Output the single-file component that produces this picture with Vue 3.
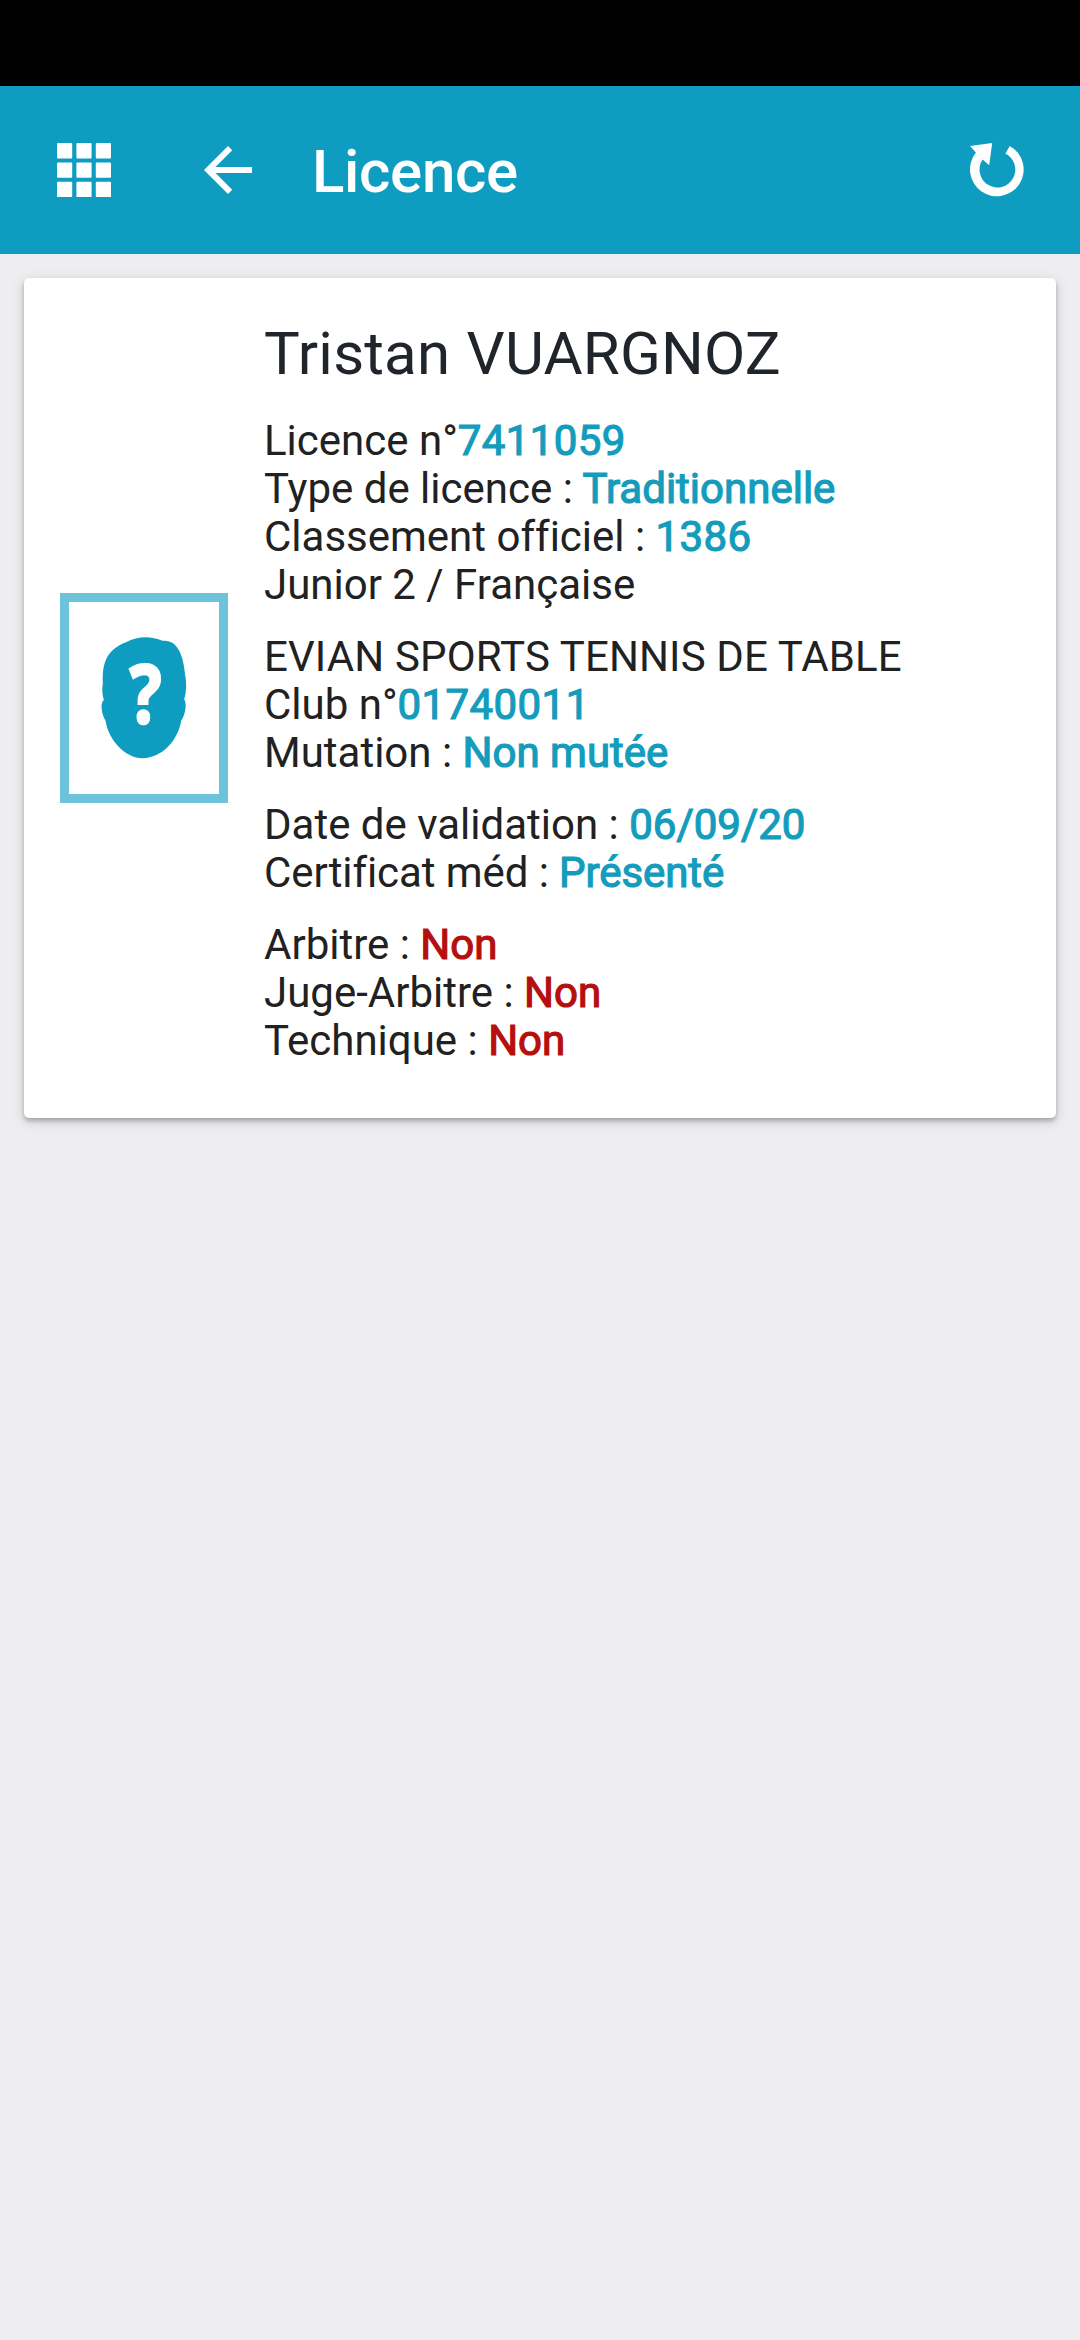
<script setup>
const groups = [
  [
    { label: 'Licence n°', value: '7411059', numeric: true },
    { label: 'Type de licence : ', value: 'Traditionnelle' },
    { label: 'Classement officiel : ', value: '1386', numeric: true },
    { label: 'Junior 2 / Française' },
  ],
  [
    { label: 'EVIAN SPORTS TENNIS DE TABLE', caps: true },
    { label: 'Club n°', value: '01740011', numeric: true },
    { label: 'Mutation : ', value: 'Non mutée' },
  ],
  [
    { label: 'Date de validation : ', value: '06/09/20' },
    { label: 'Certificat méd : ', value: 'Présenté', tight: true },
  ],
  [
    { label: 'Arbitre : ', value: 'Non', negative: true },
    { label: 'Juge-Arbitre : ', value: 'Non', negative: true },
    { label: 'Technique : ', value: 'Non', negative: true },
  ],
]
const cells = [0, 19.4, 38.8]
</script>

<template>
  <div class="screen">
    <div class="status-bar"></div>
    <header class="app-bar">
      <svg class="icon-grid" viewBox="0 0 54 54" fill="#fff">
        <template v-for="y in cells" :key="y">
          <rect v-for="x in cells" :key="x" :x="x" :y="y" width="15.2" height="15.4" rx="1" />
        </template>
      </svg>
      <svg class="icon-back" viewBox="0 0 24 24" fill="#fff">
        <path d="M20 11H7.83l5.59-5.59L12 4l-8 8 8 8 1.41-1.41L7.83 13H20v-2z" />
      </svg>
      <h1 class="title">Licence</h1>
      <svg class="icon-refresh" viewBox="86 69 163 163" fill="#fff">
        <path d="M86 78 153 69 144 136 124 119A54 54 0 1 0 193 101L206 78A81 81 0 1 1 104 98Z" />
      </svg>
    </header>
    <main class="content">
      <section class="card">
        <div class="photo">
          <svg viewBox="88 67 448 574" width="150" height="192">
            <path
              fill="#0e9dc0"
              d="M192 360C187 345 186 328 189 310C186 240 206 208 258 187C294 168 334 168 367 183C411 178 430 224 435 285C440 310 439 335 432 359C440 364 438 400 423 423C414 480 366 534 308 534C256 534 206 480 197 422C185 402 180 368 192 360Z"
            />
            <text transform="translate(317 430) scale(.83 1)" text-anchor="middle" class="unknown">?</text>
          </svg>
        </div>
        <div class="details">
          <h2 class="name">Tristan VUARGNOZ</h2>
          <div v-for="(group, i) in groups" :key="i" class="group">
            <p v-for="row in group" :key="row.label" class="row" :class="{ caps: row.caps, tight: row.tight }">{{ row.label }}<span v-if="row.value" class="value" :class="{ negative: row.negative, numeric: row.numeric }">{{ row.value }}</span></p>
          </div>
        </div>
      </section>
    </main>
  </div>
</template>

<style>
body {
  margin: 0;
  background: #eeeef0;
}
</style>

<style scoped>
.screen {
  display: flex;
  flex-direction: column;
  min-height: 2340px;
  background: #eeeef0;
  font-family: Roboto, sans-serif;
}
.status-bar {
  height: 86px;
  background: #000;
}
.app-bar {
  display: flex;
  align-items: center;
  height: 168px;
  box-sizing: border-box;
  padding: 0 57px;
  background: #0e9dc0;
}
.icon-grid {
  width: 54px;
  height: 54px;
}
.icon-back {
  width: 72px;
  height: 72px;
  margin-left: 81px;
}
.title {
  flex: 1;
  margin: 4px 0 0 48px;
  color: #fff;
  font-size: 60px;
  font-weight: 500;
  line-height: 72px;
  letter-spacing: -0.3px;
}
.icon-refresh {
  width: 54px;
  height: 54px;
  margin-right: -1px;
}
.content {
  padding: 24px;
}
.card {
  display: flex;
  align-items: center;
  height: 840px;
  box-sizing: border-box;
  padding: 0 36px;
  background: #fff;
  border-radius: 5px;
  box-shadow: 0 3px 4px rgba(0, 0, 0, 0.24), 0 3px 14px rgba(0, 0, 0, 0.14);
}
.photo {
  width: 150px;
  height: 192px;
  border: 9px solid #6dc4da;
}
.photo svg {
  display: block;
}
.unknown {
  fill: #fff;
  stroke: #fff;
  stroke-width: 8px;
  font: 700 240px 'Open Sans', sans-serif;
}
.details {
  align-self: flex-start;
  margin-left: 36px;
  padding-top: 40px;
}
.name {
  margin: 0 0 27px;
  color: #20252b;
  font-size: 60px;
  font-weight: 400;
  line-height: 72px;
  letter-spacing: 0.2px;
  word-spacing: 1.2px;
  white-space: nowrap;
}
.group + .group {
  margin-top: 24px;
}
.row {
  margin: 0;
  color: #212121;
  font-size: 42px;
  line-height: 48px;
  font-variant-ligatures: none;
  white-space: nowrap;
}
.row.caps {
  letter-spacing: 0.13px;
}
.row.tight {
  letter-spacing: -0.08px;
}
.value {
  color: #149cbc;
  -webkit-text-stroke: 1.2px #149cbc;
}
.value.numeric {
  letter-spacing: 0.4px;
}
.value.negative {
  color: #b50f0f;
  -webkit-text-stroke-color: #b50f0f;
}
</style>
